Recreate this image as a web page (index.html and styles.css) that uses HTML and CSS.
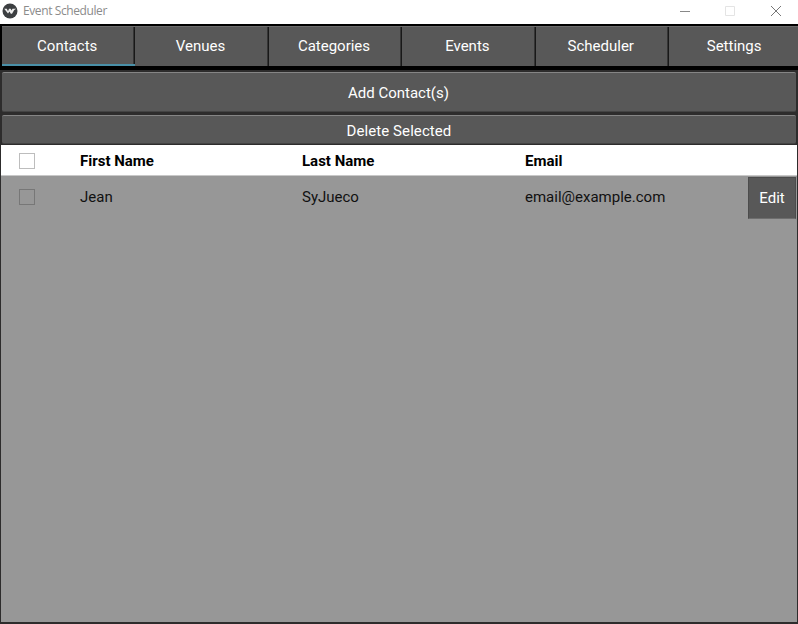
FILE: index.html
```html
<!DOCTYPE html>
<html lang="en">
<head>
<meta charset="utf-8">
<title>Event Scheduler</title>
<link rel="stylesheet" href="styles.css">
</head>
<body>
<div class="window">
  <header class="titlebar">
    <svg class="logo" width="16" height="16" viewBox="0 0 16 16"><circle cx="8" cy="8" r="7.5" fill="#3c3f41"/><path d="M2.2 5.7 4.8 5.7 6 8.2 7 5.7 8.7 5.7 9.6 7.4 10.5 5.7 14.2 5.7 12.2 7 10 10.7 8.8 10.7 7.5 8.6 6 10.5Z" fill="#eee"/></svg>
    <span class="title">Event Scheduler</span>
    <div class="controls">
      <svg width="12" height="12" viewBox="0 0 12 12"><path d="M1 6.5h10" stroke="#888"/></svg>
      <svg width="12" height="12" viewBox="0 0 12 12"><path d="M1.5 1.5h9v9h-9z" stroke="#e4e4e4" fill="none"/></svg>
      <svg class="close" width="12" height="12" viewBox="0 0 12 12"><path d="M1 1l10 10M11 1 1 11" stroke="#777"/></svg>
    </div>
  </header>
  <nav class="tabs">
    <button class="tab active">Contacts</button>
    <button class="tab">Venues</button>
    <button class="tab">Categories</button>
    <button class="tab">Events</button>
    <button class="tab">Scheduler</button>
    <button class="tab">Settings</button>
  </nav>
  <main class="panel">
    <button class="action add">Add Contact(s)</button>
    <button class="action delete">Delete Selected</button>
    <section class="table">
      <div class="row head">
        <span class="check"></span><span>First Name</span><span>Last Name</span><span>Email</span>
      </div>
      <div class="row entry">
        <span class="check"></span><span>Jean</span><span>SyJueco</span><span>email@example.com</span><button class="edit">Edit</button>
      </div>
    </section>
  </main>
</div>
</body>
</html>
```
FILE: styles.css
```css
* { box-sizing: border-box; }
body { margin: 0; background: #fff; font: 15px Roboto, sans-serif; }
button { margin: 0; padding: 0; border: 0; color: #fff; background: #585858; font: inherit; letter-spacing: inherit; }
.window { width: 798px; height: 624px; display: flex; flex-direction: column; overflow: hidden; }
.titlebar { height: 24px; display: flex; align-items: flex-start; padding: 3px 16px 0 2px; }
.logo { display: block; }
.title { margin-left: 5px; font: 12px/16px "Open Sans", sans-serif; letter-spacing: -0.4px; color: #8b8b8b; }
.controls { margin-left: auto; display: flex; gap: 33px; padding-top: 2px; }
.controls svg { display: block; }
.controls .close { margin-left: 1px; }
.tabs { height: 46px; flex: none; display: grid; grid-template-columns: repeat(6, 133.4px); background: #000; padding: 2px 0 4px 2px; }
.tab { height: 40px; padding: 0 3px 2px 0; border-top: 1px solid #6c6c6c; box-shadow: inset -1px 0 #181818, inset -2px 0 #353535; }
.tab.active { padding-bottom: 0; border-bottom: 2px solid #4a90a8; }
.panel { flex: 1; min-height: 0; display: flex; flex-direction: column; background: #2d2c2c; padding: 2px 1px 2px; }
.action { flex: none; margin: 0 1px; border-radius: 2px; border-top: 1px solid #858585; border-bottom: 1px solid #444; }
.add { height: 40px; padding: 2px 1px 0 0; }
.delete { height: 29px; margin-top: 3px; padding-top: 3px; letter-spacing: 0.08px; }
.table { flex: 1; margin-top: 1px; background: #979797; }
.row { display: grid; grid-template-columns: 61px 222px 223px 223px 48px; align-items: center; padding-left: 18px; }
.head { height: 31px; padding-top: 2px; background: #fff; border-bottom: 1px solid #c8c8c8; color: #000; font-weight: 700; }
.entry { height: 43px; color: #111; }
.entry span { position: relative; top: -1px; }
.check { width: 16px; height: 16px; border: 1px solid #bdbdbd; }
.entry .check { border-color: #777; }
.edit { width: 48px; height: 42px; margin-top: 1px; padding-bottom: 1px; border: 1px solid #4c4c4c; border-bottom-color: #6e6e6e; }
```
